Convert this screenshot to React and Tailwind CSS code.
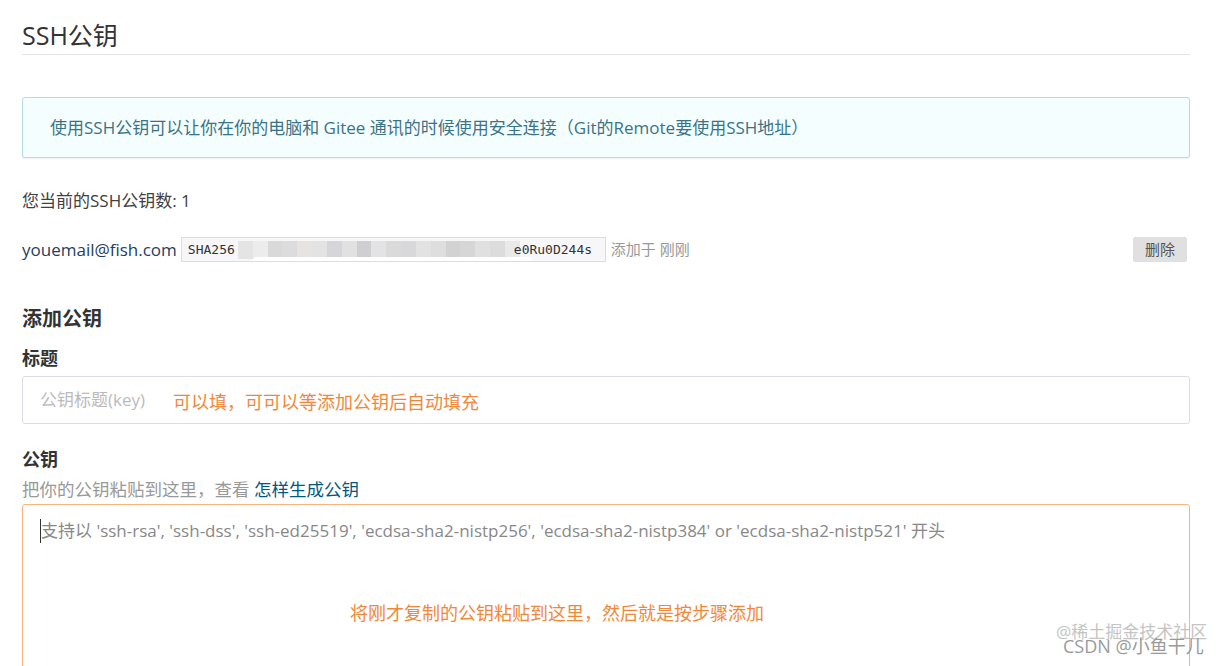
import React from "react";

const mosaic = [
  "#e4e4e4", "#ececec", "#d9d9d9", "#dcdcdc", "#e6e3e2", "#e3e3e3", "#d6d6d9", "#e1e1e1",
  "#cfcfd2", "#e3e3e3", "#dadada", "#d8d8db", "#e2e2e2", "#dedede", "#d2d2d2", "#d6d6d6",
  "#e0e0e0", "#dcdcdc", "#e9e9e9",
];

export default function App() {
  return (
    <div className="relative min-h-screen overflow-hidden bg-white pl-[22px] pr-[42px] font-['Open_Sans','Noto_Sans_CJK_SC',sans-serif] text-[#333]">
      <h1 className="border-b border-[#e5e5e5] pt-[20px] pb-[4px] text-[25px] leading-[30px] text-[#333]">
        SSH公钥
      </h1>

      <div className="mt-[42px] flex h-[61px] items-center rounded-[3px] border border-[#b5dbe3] bg-[#f5fefe] px-[27px] text-[17px] text-[#3a7387] shadow-[0_1px_2px_rgba(0,0,0,0.06)]">
        使用SSH公钥可以让你在你的电脑和 Gitee 通讯的时候使用安全连接（Git的Remote要使用SSH地址）
      </div>

      <p className="mt-[31px] text-[17px] leading-[24px] text-[#404040]">您当前的SSH公钥数: 1</p>

      <div className="mt-[24px] flex h-[25px] items-center">
        <span className="text-[17px] text-[#23405f]">youemail@fish.com</span>
        <div className="relative ml-[4px] flex h-[25px] w-[425px] items-center overflow-hidden border border-[#ddd] bg-[#f7f7f9] px-[6px] font-['DejaVu_Sans_Mono',monospace] text-[13px] text-[#333]">
          <span>SHA256</span>
          <span className="ml-[3px] flex h-[18px] w-[282px] shrink-0">
            {mosaic.map((c, i) => (
              <span key={i} className="h-full flex-1" style={{ backgroundColor: c }} />
            ))}
          </span>
          <span className="ml-[-6px]">e0Ru0D244s</span>
          <span className="absolute left-[70px] top-[19px] h-[10px] w-[280px] rounded-full bg-white" />
        </div>
        <span className="ml-[5px] text-[15px] text-[#999]">添加于 刚刚</span>
        <button className="ml-auto mr-[3px] h-[25px] w-[54px] rounded-[2px] bg-[#e0e0e0] text-[15px] text-[#555]">
          删除
        </button>
      </div>

      <h2 className="mt-[44px] text-[20px] font-bold leading-[26px] text-[#333]">添加公钥</h2>

      <p className="mt-[14px] text-[18px] font-bold leading-[24px] text-[#333]">标题</p>
      <div className="mt-[6px] flex h-[48px] items-center rounded-[3px] border border-[#dcdce2] px-[17px] text-[17px]">
        <span className="text-[#bbb]">公钥标题(key)</span>
        <span className="ml-[28px] mt-[4px] text-[18px] text-[#f0883a]">可以填，可可以等添加公钥后自动填充</span>
      </div>

      <p className="mt-[23px] text-[18px] font-bold leading-[24px] text-[#333]">公钥</p>
      <p className="mt-[6px] text-[17.5px] leading-[24px] text-[#999]">
        把你的公钥粘贴到这里，查看 <span className="text-[#005980]">怎样生成公钥</span>
      </p>
      <div className="relative mt-[3px] h-[200px] rounded-[3px] border border-[#f9b57c] px-[17px] pt-[14px]">
        <p className="border-l border-[#333] text-[17px] leading-[24px] text-[#888]">
          支持以 'ssh-rsa', 'ssh-dss', 'ssh-ed25519', 'ecdsa-sha2-nistp256', 'ecdsa-sha2-nistp384' or 'ecdsa-sha2-nistp521' 开头
        </p>
        <p className="absolute left-[327px] top-[95px] text-[18px] text-[#f0883a]">
          将刚才复制的公钥粘贴到这里，然后就是按步骤添加
        </p>
      </div>

      <div className="pointer-events-none absolute left-[1056px] top-[621px] text-[17px] leading-[22px] text-[#c4c4c4]">
        @稀土掘金技术社区
      </div>
      <div className="pointer-events-none absolute left-[1063px] top-[636px] text-[18px] leading-[20px] text-[#9a9a9a]">
        CSDN @小鱼干儿
      </div>
    </div>
  );
}
